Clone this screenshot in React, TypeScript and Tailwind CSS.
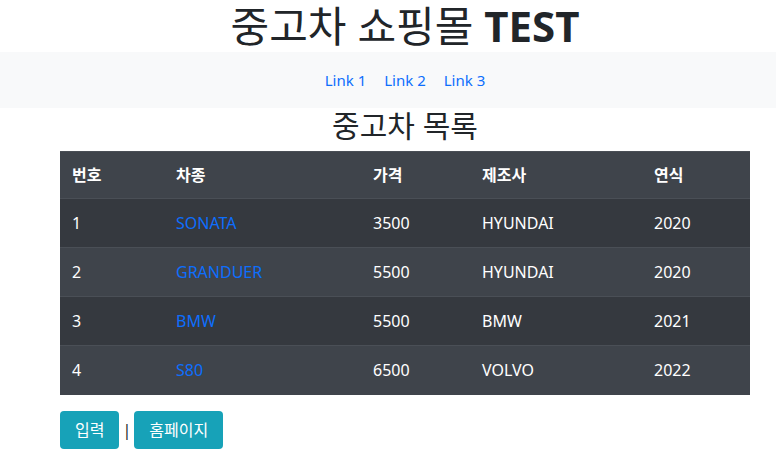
const cars = [
  { no: 1, name: "SONATA", price: 3500, maker: "HYUNDAI", year: 2020 },
  { no: 2, name: "GRANDUER", price: 5500, maker: "HYUNDAI", year: 2020 },
  { no: 3, name: "BMW", price: 5500, maker: "BMW", year: 2021 },
  { no: 4, name: "S80", price: 6500, maker: "VOLVO", year: 2022 },
];

const font = {
  fontFamily: '"Segoe UI", "Noto Sans", "Noto Sans CJK KR", sans-serif',
};

const App = () => {
  return (
    <div className="bg-white text-[#212529] min-h-[467px]" style={font}>
      <h1 className="pl-[34px] text-center text-[42px] leading-[52px] font-normal">
        중고차 쇼핑몰 <span className="font-bold">TEST</span>
      </h1>

      <nav className="bg-[#f8f9fa] h-[56px] pl-[34px] flex items-center justify-center gap-[18px] text-[15px] text-[#0d6efd]">
        <a href="#">Link 1</a>
        <a href="#">Link 2</a>
        <a href="#">Link 3</a>
      </nav>

      <div className="ml-[60px] w-[690px]">
        <h2 className="text-center text-[30px] leading-[36px] font-normal mb-[7px]">
          중고차 목록
        </h2>

        <table className="w-full text-white text-[16px] border-collapse">
          <thead>
            <tr className="bg-[#3f444b] h-[47px] border-t border-[#4a4f56]">
              <th className="w-[104px] text-left font-bold px-3">번호</th>
              <th className="w-[197px] text-left font-bold px-3">차종</th>
              <th className="w-[109px] text-left font-bold px-3">가격</th>
              <th className="w-[172px] text-left font-bold px-3">제조사</th>
              <th className="text-left font-bold px-3">연식</th>
            </tr>
          </thead>
          <tbody>
            {cars.map((car, i) => (
              <tr
                key={car.no}
                className={
                  "h-[49px] border-t border-[#4a4f56] " +
                  (i % 2 === 0 ? "bg-[#35393f]" : "bg-[#3f444b]")
                }
              >
                <td className="px-3">{car.no}</td>
                <td className="px-3">
                  <a href="#" className="text-[#0d6efd]">
                    {car.name}
                  </a>
                </td>
                <td className="px-3">{car.price}</td>
                <td className="px-3">{car.maker}</td>
                <td className="px-3">{car.year}</td>
              </tr>
            ))}
          </tbody>
        </table>

        <div className="mt-[16px] flex items-center gap-[3px]">
          <button className="h-[38px] px-[15px] rounded-[4px] bg-[#17a2b8] text-white text-[16px]">
            입력
          </button>
          <span className="text-[16px] text-[#212529]">|</span>
          <button className="h-[38px] px-[15px] rounded-[4px] bg-[#17a2b8] text-white text-[16px]">
            홈페이지
          </button>
        </div>
      </div>
    </div>
  );
};

export default App;
